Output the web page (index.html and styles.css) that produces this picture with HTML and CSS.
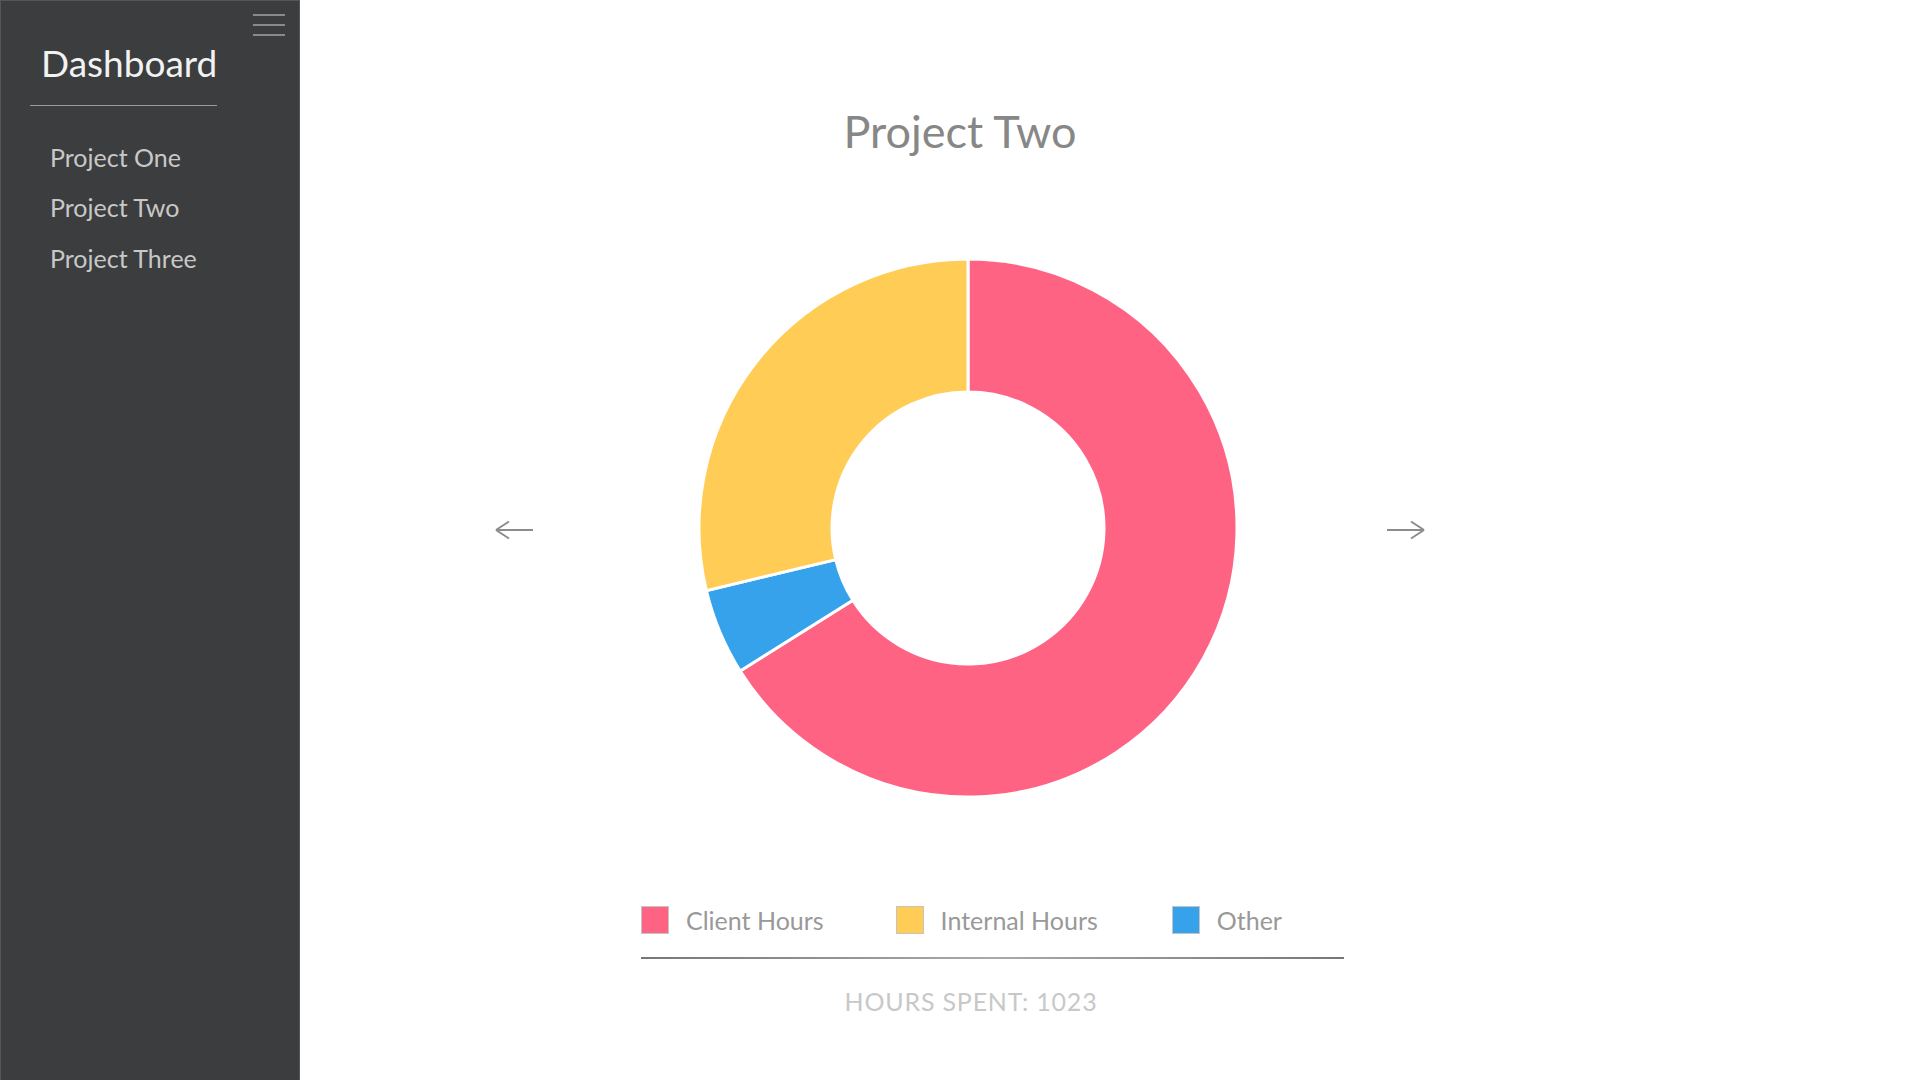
FILE: index.html
```html
<!DOCTYPE html>
<html lang="en">
<head>
    <meta charset="UTF-8">
    <meta name="viewport" content="width=device-width, initial-scale=1.0">
    <title>Dashboard</title>
    <link rel="stylesheet" href="styles.css">
</head>
<body>
    <aside class="sidebar">
        <button class="menu-toggle" aria-label="Toggle menu">
            <span></span>
            <span></span>
            <span></span>
        </button>
        <h1 class="brand">Dashboard</h1>
        <ul class="nav">
            <li><a href="#">Project One</a></li>
            <li><a href="#">Project Two</a></li>
            <li><a href="#">Project Three</a></li>
        </ul>
    </aside>

    <main class="content">
        <h2 class="project-title">Project Two</h2>

        <div class="chart-row">
            <button class="arrow" aria-label="Previous project">
                <svg width="40" height="24" viewBox="0 0 40 24" fill="none" stroke="#8c8c8c" stroke-width="2">
                    <path d="M2 14 H39 M2 14 L15 5.5 M2 14 L15 22.5"/>
                </svg>
            </button>

            <!-- hours breakdown: client 676, internal 294, other 53 -->
            <div class="chart">
                <svg width="540" height="540" viewBox="0 0 540 540" stroke="#fff" stroke-width="3">
                    <path fill="#ff6384" d="M270 1 A269 269 0 1 1 42.15 412.99 L154.81 342.29 A136 136 0 1 0 270 134 Z"/>
                    <path fill="#36a2eb" d="M42.15 412.99 A269 269 0 0 1 8.39 332.62 L137.74 301.66 A136 136 0 0 0 154.81 342.29 Z"/>
                    <path fill="#ffcd56" d="M8.39 332.62 A269 269 0 0 1 270 1 L270 134 A136 136 0 0 0 137.74 301.66 Z"/>
                </svg>
            </div>

            <button class="arrow" aria-label="Next project">
                <svg width="40" height="24" viewBox="0 0 40 24" fill="none" stroke="#8c8c8c" stroke-width="2">
                    <path d="M1 14 H38 M38 14 L25 5.5 M38 14 L25 22.5"/>
                </svg>
            </button>
        </div>

        <div class="legend">
            <div class="legend-items">
                <div class="legend-item"><span class="swatch client"></span>Client Hours</div>
                <div class="legend-item"><span class="swatch internal"></span>Internal Hours</div>
                <div class="legend-item"><span class="swatch other"></span>Other</div>
            </div>
            <div class="divider"></div>
        </div>

        <p class="hours">HOURS SPENT: 1023</p>
    </main>
</body>
</html>
```

FILE: styles.css
```css
body {
    margin: 0;
    height: 100vh;
    display: flex;
    overflow: hidden;
    background: #fff;
    font-family: Lato, "Open Sans", sans-serif;
}

/* sidebar */
.sidebar {
    width: 300px;
    flex-shrink: 0;
    box-sizing: border-box;
    display: flex;
    flex-direction: column;
    background-color: #3c3d3f;
    border: 1px solid #555658;
    border-bottom: none;
}
.menu-toggle {
    align-self: flex-end;
    width: 32px;
    height: 22px;
    margin: 13px 14px 0 0;
    padding: 0;
    border: none;
    background: none;
    display: flex;
    flex-direction: column;
    justify-content: space-between;
    cursor: pointer;
}
.menu-toggle span {
    display: block;
    height: 2px;
    background-color: #8a8a8a;
}
.brand {
    width: 187px;
    box-sizing: border-box;
    margin: 8px 0 0 29px;
    padding: 0 0 24px 11px;
    border-bottom: 1px solid #9a9a9a;
    font-size: 37px;
    line-height: 37px;
    font-weight: 400;
    color: #f2f2f2;
}
.nav {
    list-style: none;
    margin: 26px 0 0;
    padding: 0 0 0 49px;
}
.nav li {
    font-size: 25px;
    line-height: 50px;
}
.nav li:last-child {
    margin-top: 1px;
}
.nav a {
    color: #c8c8c8;
    text-decoration: none;
}

/* main area */
.content {
    flex: 1;
    display: flex;
    flex-direction: column;
    align-items: center;
    padding: 109px 300px 0 0;
}
.project-title {
    margin: 0;
    font-size: 45px;
    line-height: 45px;
    font-weight: 400;
    color: #878787;
}
.chart-row {
    display: flex;
    align-items: center;
    gap: 148px;
    margin-top: 104px;
}
.chart {
    width: 540px;
    height: 540px;
    margin-left: 16px;
}
.chart svg {
    display: block;
}
.arrow {
    width: 40px;
    height: 24px;
    padding: 0;
    border: none;
    background: none;
    cursor: pointer;
}
.arrow svg {
    display: block;
}

.legend {
    align-self: flex-start;
    width: 703px;
    margin: 108px 0 0 341px;
}
.legend-items {
    display: flex;
    gap: 72px;
}
.legend-item {
    display: flex;
    align-items: center;
    gap: 17px;
    font-size: 25px;
    line-height: 26px;
    color: #999;
}
.legend-item:last-child {
    margin-left: 2px;
}
.swatch {
    width: 28px;
    height: 28px;
    box-sizing: border-box;
    border: 1px solid #c4c4c4;
}
.swatch.client {
    background-color: #ff6384;
}
.swatch.internal {
    background-color: #ffcd56;
}
.swatch.other {
    background-color: #36a2eb;
}
.divider {
    height: 2px;
    margin-top: 23px;
    background: linear-gradient(90deg, #777, #aaa 50%, #777);
}
.hours {
    align-self: stretch;
    margin: 30px 0 0;
    padding-left: 22px;
    text-align: center;
    font-size: 25px;
    line-height: 25px;
    letter-spacing: 0.8px;
    color: #c8c8c8;
}
```
